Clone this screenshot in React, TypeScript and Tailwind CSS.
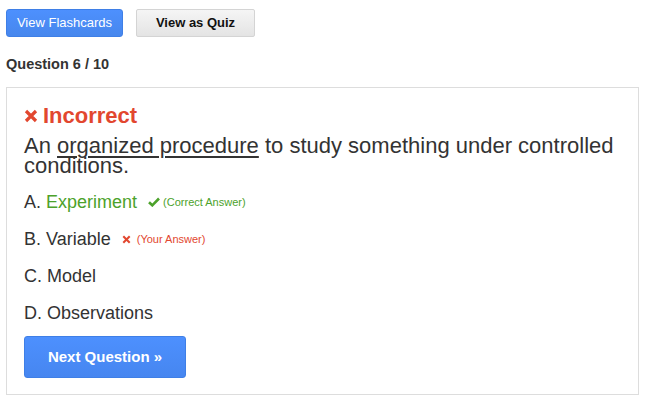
import React from 'react'

const XMark = ({ size, className }: { size: number; className?: string }) => (
  <svg width={size} height={size} viewBox="0 0 14 14" className={className}>
    <path d="M2 2 L12 12 M12 2 L2 12" stroke="currentColor" strokeWidth="3.2" strokeLinecap="butt" />
  </svg>
)

const Check = ({ className }: { className?: string }) => (
  <svg width="12" height="10" viewBox="0 0 12 10" className={className}>
    <path d="M1 5.2 L4.3 8.3 L11 1.5" fill="none" stroke="currentColor" strokeWidth="2.6" />
  </svg>
)

export default function App() {
  const options = [
    { letter: 'A', text: 'Experiment', state: 'correct' },
    { letter: 'B', text: 'Variable', state: 'wrong' },
    { letter: 'C', text: 'Model', state: '' },
    { letter: 'D', text: 'Observations', state: '' },
  ]

  return (
    <div className="min-h-[402px] bg-white px-[6px] pt-[9px] font-['Liberation_Sans',Arial,sans-serif] text-[#333]">
      {/* top buttons */}
      <div className="flex gap-[13px]">
        <button className="h-[28px] w-[117px] rounded-[3px] border border-[#3f7fe6] bg-gradient-to-b from-[#4d90fe] to-[#4787ed] text-[13px] text-white">
          View Flashcards
        </button>
        <button className="h-[28px] w-[119px] rounded-[2px] border border-[#d4d4d4] bg-gradient-to-b from-[#f5f5f5] to-[#e4e4e4] text-[13px] font-bold text-[#111]">
          View as Quiz
        </button>
      </div>

      <div className="mt-[19px] text-[14.5px] font-bold leading-[17px] text-[#333]">Question 6 / 10</div>

      {/* card */}
      <div className="mt-[14px] w-[633px] border border-[#ddd] px-[17px] pt-[15px] pb-[16px]">
        <div className="flex items-center gap-[5px] text-[22px] font-bold leading-[25px] text-[#e2472f]">
          <XMark size={14} />
          <span>Incorrect</span>
        </div>
        <p className="mt-[8px] text-[22px] leading-[20px] text-[#333]">
          An <span className="underline decoration-[2px] underline-offset-[3px]">organized procedure</span> to study
          something under controlled conditions.
        </p>

        <ul className="mt-[16px]">
          {options.map((o, i) => (
            <li key={o.letter} className={`flex items-center text-[18px] leading-[20px] ${i > 0 ? 'mt-[17px]' : ''}`}>
              <span className="text-[#333]">{o.letter}.&nbsp;</span>
              <span className={o.state === 'correct' ? 'text-[#4ca22b]' : 'text-[#333]'}>{o.text}</span>
              {o.state === 'correct' && (
                <span className="ml-[11px] flex items-center text-[11px] text-[#4ca22b]">
                  <Check className="mr-[3px]" />
                  (Correct Answer)
                </span>
              )}
              {o.state === 'wrong' && (
                <span className="ml-[11px] flex items-center text-[11px] text-[#e2472f]">
                  <XMark size={9} className="mr-[6px]" />
                  (Your Answer)
                </span>
              )}
            </li>
          ))}
        </ul>

        <button className="mt-[13px] h-[42px] w-[162px] rounded-[3px] border border-[#3f7fe6] bg-gradient-to-b from-[#4d90fe] to-[#4686f0] text-[15px] font-bold text-white">
          Next Question »
        </button>
      </div>
    </div>
  )
}
